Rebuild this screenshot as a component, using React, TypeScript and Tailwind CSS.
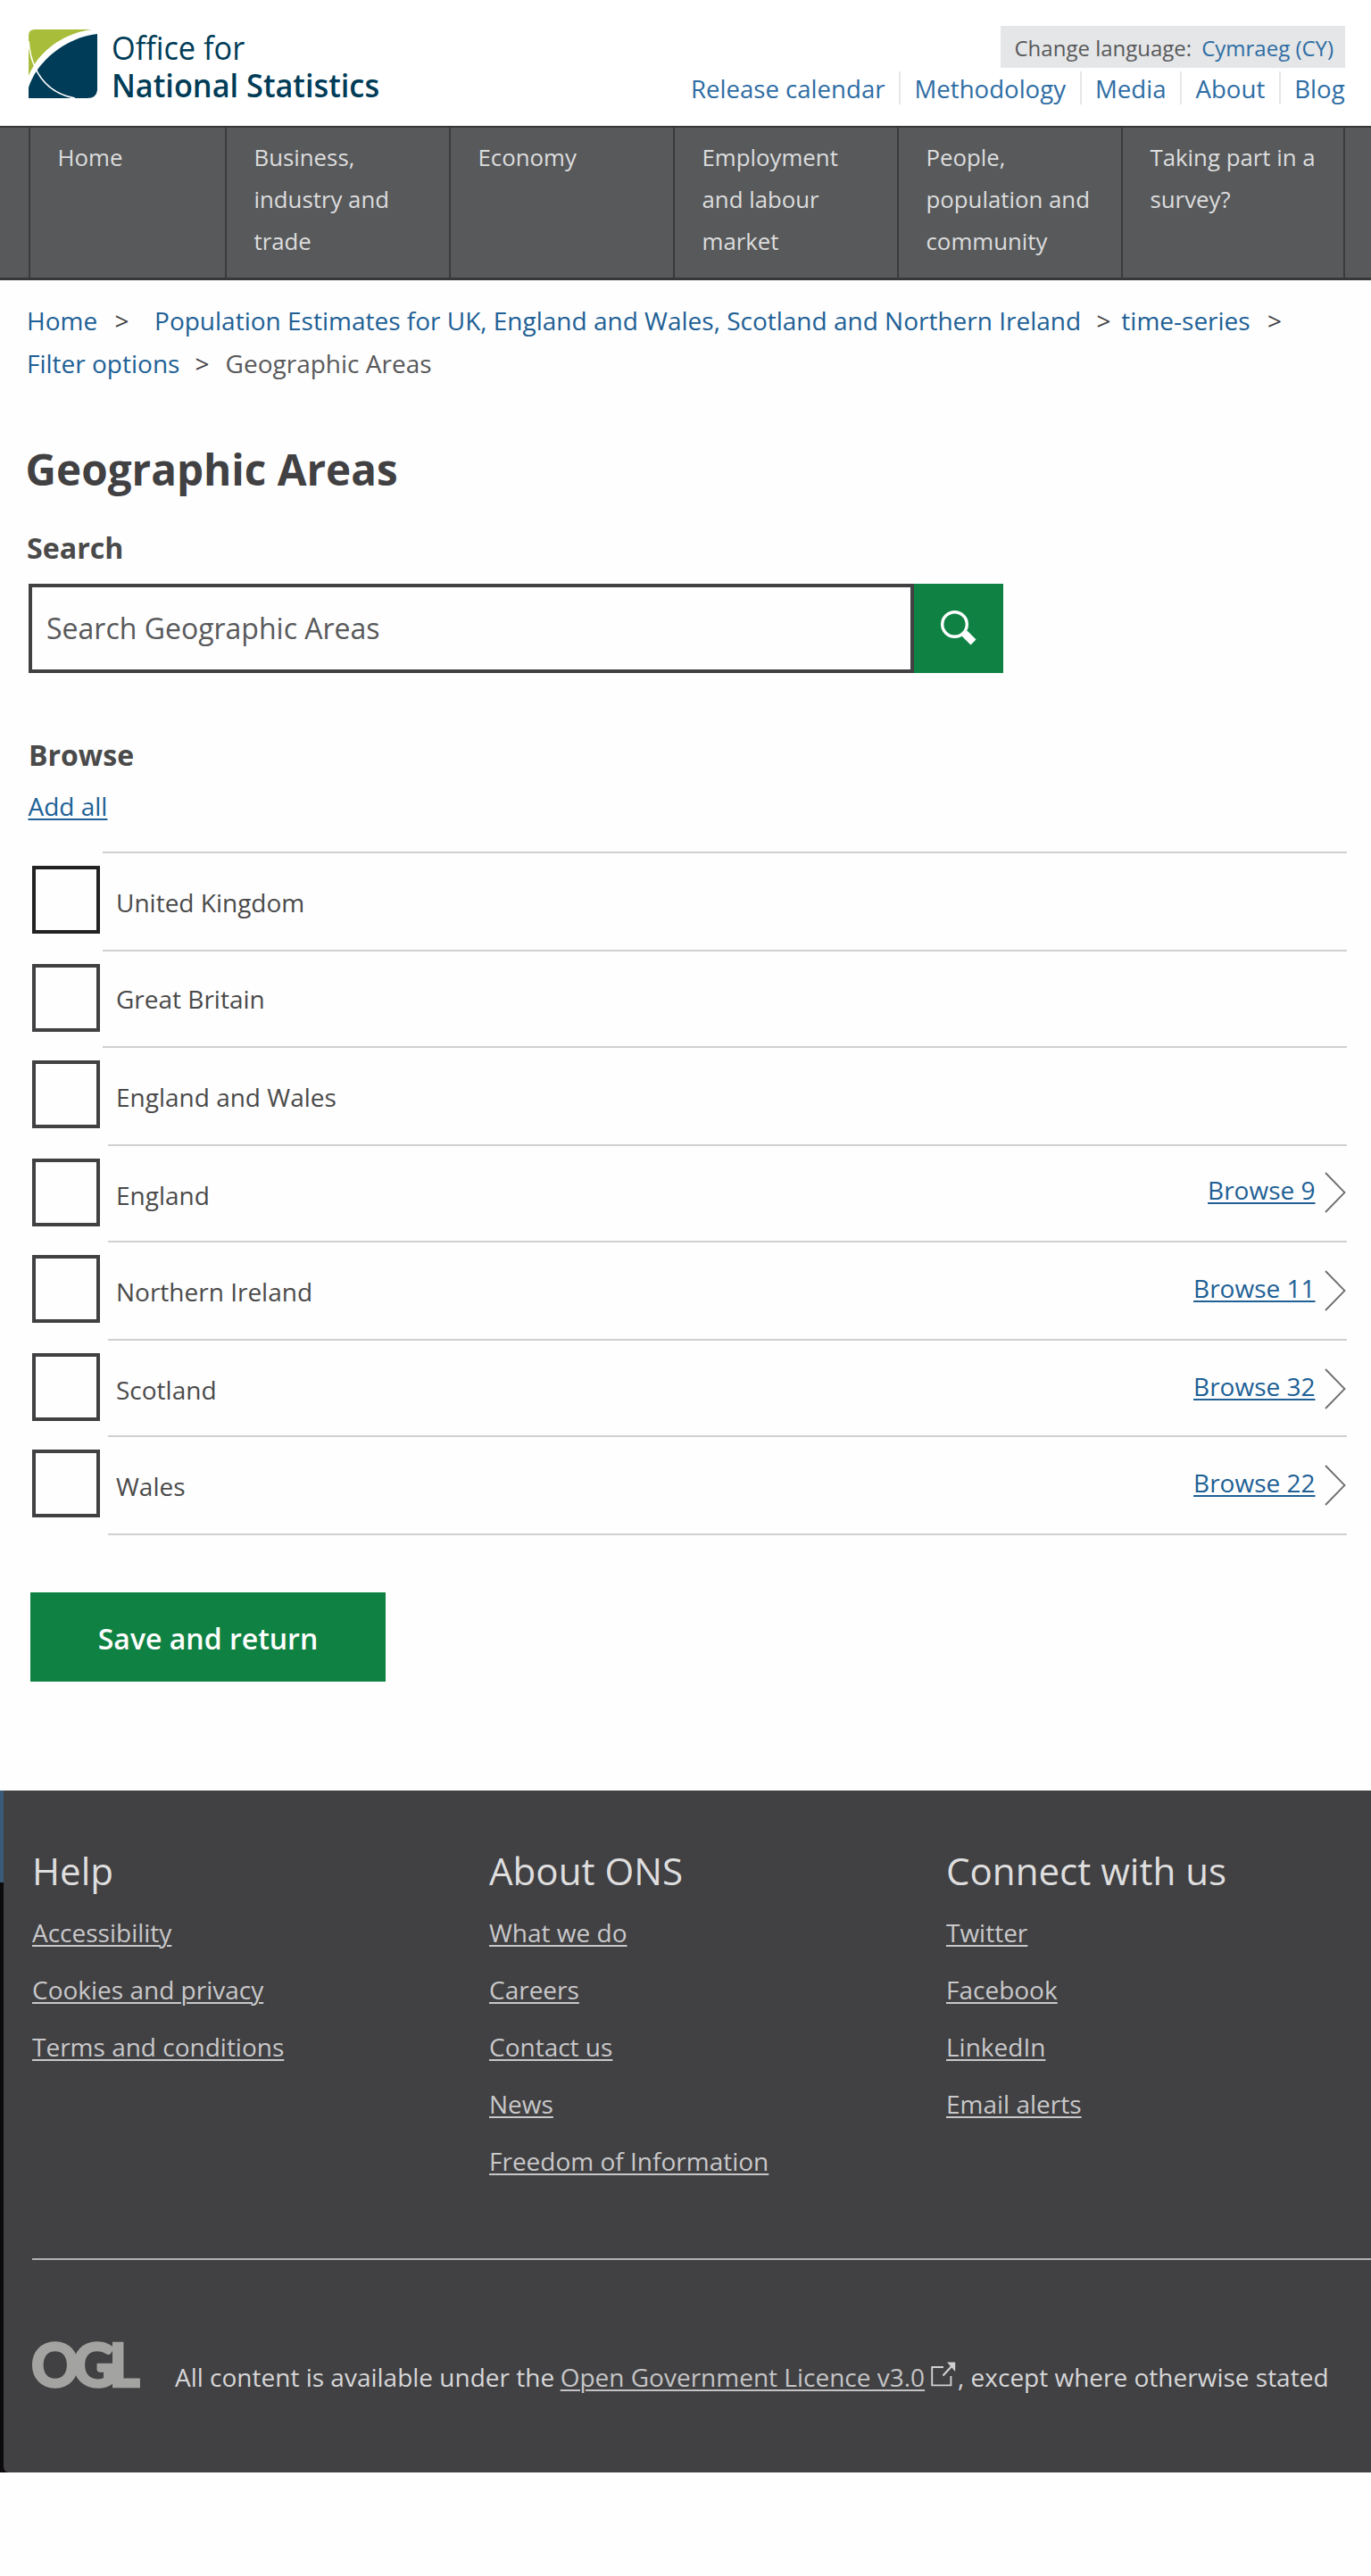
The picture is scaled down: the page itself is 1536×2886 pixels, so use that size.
const navItems: { lines: string[]; width: string }[] = [
  { lines: ["Home"], width: "w-[220px]" },
  { lines: ["Business,", "industry and", "trade"], width: "w-[251px]" },
  { lines: ["Economy"], width: "w-[251px]" },
  { lines: ["Employment", "and labour", "market"], width: "w-[251px]" },
  { lines: ["People,", "population and", "community"], width: "w-[251px]" },
  { lines: ["Taking part in a", "survey?"], width: "w-[249px]" },
];

const topLinks = ["Release calendar", "Methodology", "Media", "About", "Blog"];

type Area = {
  name: string;
  browse?: string;
  height: string;
  rule: string;
  box: string;
  labelTop: string;
  browseTop?: string;
  chevronTop?: string;
};

const areas: Area[] = [
  { name: "United Kingdom", height: "h-[110px]", rule: "ml-[3px]", box: "border-[#222222]", labelTop: "mt-[36px]" },
  { name: "Great Britain", height: "h-[108px]", rule: "ml-[3px]", box: "border-[#414042]", labelTop: "mt-[34px]" },
  { name: "England and Wales", height: "h-[110px]", rule: "ml-[3px]", box: "border-[#414042]", labelTop: "mt-[36px]" },
  { name: "England", browse: "Browse 9", height: "h-[108px]", rule: "ml-[9px]", box: "border-[#414042]", labelTop: "mt-[36px]", browseTop: "mt-[30px]", chevronTop: "mt-[28px]" },
  { name: "Northern Ireland", browse: "Browse 11", height: "h-[110px]", rule: "ml-[9px]", box: "border-[#414042]", labelTop: "mt-[36px]", browseTop: "mt-[32px]", chevronTop: "mt-[30px]" },
  { name: "Scotland", browse: "Browse 32", height: "h-[108px]", rule: "ml-[9px]", box: "border-[#414042]", labelTop: "mt-[36px]", browseTop: "mt-[32px]", chevronTop: "mt-[30px]" },
  { name: "Wales", browse: "Browse 22", height: "h-[110px]", rule: "ml-[9px]", box: "border-[#414042]", labelTop: "mt-[36px]", browseTop: "mt-[32px]", chevronTop: "mt-[30px]" },
];

const footerColumns = [
  { title: "Help", links: ["Accessibility", "Cookies and privacy", "Terms and conditions"] },
  { title: "About ONS", links: ["What we do", "Careers", "Contact us", "News", "Freedom of Information"] },
  { title: "Connect with us", links: ["Twitter", "Facebook", "LinkedIn", "Email alerts"] },
];

function LogoMark() {
  return (
    <svg width="77" height="77" viewBox="0 0 77 77" aria-hidden="true">
      <clipPath id="mark">
        <path d="M7 0H77V68Q76 77 66 77H0V7Q0 0 7 0Z" />
      </clipPath>
      <g clipPath="url(#mark)">
        <rect width="77" height="77" fill="#ffffff" />
        <path d="M0 0H71C46 3 22 17 8 37C5 42 2 47 0 52Z" fill="#a8bd3a" />
        <path d="M77 5C50 8 25 24 10 45C5 52 2 59 0 65V77H77Z" fill="#003c57" />
        <path d="M0 13Q1 28 7 42C15 60 30 73 52 77" fill="none" stroke="#ffffff" strokeWidth="1.7" />
      </g>
    </svg>
  );
}

function Header() {
  return (
    <header className="flex h-[141px] justify-between bg-white pl-8">
      <div className="flex">
        <div className="pt-[33px]">
          <LogoMark />
        </div>
        <div className="ml-[16px] origin-left scale-x-[0.94] pt-[32px] text-[36.5px] leading-[42px] whitespace-nowrap text-[#003c57]">
          <div>Office for</div>
          <div className="font-semibold">National Statistics</div>
        </div>
      </div>
      <div className="flex flex-col items-end pt-[29px] pr-[29px]">
        <div className="flex h-[47px] w-[386px] gap-[11px] bg-[#e5e6e7] pt-px pl-[15.5px] text-[24px] leading-[47px] whitespace-nowrap">
          <span className="text-[#58595b]">Change language:</span>
          <a className="text-[#2e6da4]">Cymraeg (CY)</a>
        </div>
        <nav className="mt-[4px] mr-[0.4px] flex h-[37px] text-[27.6px] leading-[38px] whitespace-nowrap text-[#2e6da4]">
          {topLinks.map((label, i) => (
            <a key={label} className={i === 0 ? "" : "ml-[15.5px] border-l-2 border-[#e6e7e8] pl-[15.5px]"}>
              {label}
            </a>
          ))}
        </nav>
      </div>
    </header>
  );
}

function Navigation() {
  return (
    <nav className="flex h-[173px] border-t-2 border-b-[3px] border-[#373737] bg-[#58595b] pl-[31.5px] text-[25.8px] leading-[47px] text-[#dcddde]">
      {navItems.map((item) => (
        <a key={item.lines[0]} className={`${item.width} shrink-0 border-l-2 border-[#3b3b3c] pt-[9.5px] pl-[31px] whitespace-nowrap`}>
          {item.lines.map((line) => (
            <span key={line} className="block">
              {line}
            </span>
          ))}
        </a>
      ))}
      <span className="w-[2px] bg-[#3b3b3c]" />
    </nav>
  );
}

function Breadcrumb() {
  return (
    <div className="pt-[21px] text-[28px] leading-[48px] whitespace-nowrap text-[#206095]">
      <div className="flex pl-[30px]">
        <a>Home</a>
        <span className="ml-[19.4px] text-[#414042]">&gt;</span>
        <a className="ml-[28.5px]">Population Estimates for UK, England and Wales, Scotland and Northern Ireland</a>
        <span className="ml-[17.4px] text-[#414042]">&gt;</span>
        <a className="ml-[11.8px]">time-series</a>
        <span className="ml-[19.4px] text-[#414042]">&gt;</span>
      </div>
      <div className="flex pl-[30px]">
        <a>Filter options</a>
        <span className="ml-[17px] text-[#414042]">&gt;</span>
        <span className="ml-[18.2px] text-[#58595b]">Geographic Areas</span>
      </div>
    </div>
  );
}

function SearchBox() {
  return (
    <div className="mt-[18px] ml-[32px] flex h-[100px]">
      <div className="flex w-[992px] items-center border-4 border-[#414042] pl-[16px] text-[32px] leading-[44px] text-[#58595b]">
        Search Geographic Areas
      </div>
      <button className="flex w-[100px] bg-[#0f8243] pt-[30px] pl-[30px]">
        <svg width="40" height="39" viewBox="0 0 40 39" aria-hidden="true">
          <circle cx="15.5" cy="15.5" r="13.8" fill="none" stroke="#ffffff" strokeWidth="3.4" />
          <path d="M29.5 22.5L39.5 32.5L33.5 38.5L23.5 28.5Z" fill="#ffffff" />
        </svg>
      </button>
    </div>
  );
}

function AreaRow({ area }: { area: Area }) {
  return (
    <div className={`flex ${area.height}`}>
      <span className={`mt-[16px] size-[76px] shrink-0 border-4 ${area.box}`} />
      <div className={`flex grow ${area.rule} border-t-2 border-[#d0d0d0]`}>
        <span className={`${area.labelTop} ${area.rule === "ml-[3px]" ? "ml-[15px]" : "ml-[9px]"} grow text-[#4a4a4a]`}>{area.name}</span>
        {area.browse && (
          <>
            <a className={`${area.browseTop} self-start text-[#206095] underline decoration-2 underline-offset-[3px]`}>{area.browse}</a>
            <svg className={`${area.chevronTop} mr-[1.5px] ml-[10px]`} width="24" height="48" viewBox="0 0 24 48" aria-hidden="true">
              <path d="M1 2L22.5 24L1 46" fill="none" stroke="#6d6e70" strokeWidth="1.8" />
            </svg>
          </>
        )}
      </div>
    </div>
  );
}

function Footer() {
  return (
    <footer className="mt-[122px] flex h-[764px] bg-[#0c0a0b]">
      <div className="w-[4px] shrink-0">
        <div className="h-[103px] bg-[#3a5a79]" />
      </div>
      <div className="flex grow flex-col rounded-bl-[6px] bg-[#414042] pl-[32px]">
        <div className="grid h-[524px] grid-cols-[512px_512px_1fr] pt-[62px] whitespace-nowrap">
          {footerColumns.map((column) => (
            <div key={column.title}>
              <h2 className="text-[42.1px] leading-[56px] text-[#dededf]">{column.title}</h2>
              <ul className="mt-[9px] text-[28px] leading-[64px] text-[#c8c8ca]">
                {column.links.map((link) => (
                  <li key={link}>
                    <a className="underline decoration-2 underline-offset-[3px]">{link}</a>
                  </li>
                ))}
              </ul>
            </div>
          ))}
        </div>
        <div className="h-[2px] shrink-0 bg-[#b1b1b3]" />
        <div className="flex pt-[91px] whitespace-nowrap">
          <div className="-ml-px w-[161px] font-[Lato] text-[66px] leading-[52px] font-black tracking-[-7px] text-[#a3a4a1] [-webkit-text-stroke:2.5px_#a3a4a1]">
            OGL
          </div>
          <div className="flex pt-[18px] text-[28px] leading-[44px] text-[#d6d6d8]">
            <span>All content is available under the</span>
            <a className="ml-[6.5px] text-[#c4c4c6] underline decoration-2 underline-offset-[3px]">Open Government Licence v3.0</a>
            <svg className="mt-[5px] ml-[7px]" width="28" height="28" viewBox="0 0 28 28" aria-hidden="true">
              <path d="M14 6H1.2V26.4H22.4V16" fill="none" stroke="#d0d0d2" strokeWidth="1.9" />
              <path d="M13.5 15.5L25 3" fill="none" stroke="#d0d0d2" strokeWidth="2.2" />
              <path d="M18 0.5H27.2V11Z" fill="#d0d0d2" />
            </svg>
            <span className="ml-[2px]">, except where otherwise stated</span>
          </div>
        </div>
      </div>
    </footer>
  );
}

export default function App() {
  return (
    <div className="min-h-[2886px] w-[1536px] overflow-hidden bg-[#fefefe] font-['Open_Sans',sans-serif]">
      <Header />
      <Navigation />
      <main>
        <Breadcrumb />
        <h1 className="mt-[63px] pl-[28.6px] text-[47.6px] leading-[64px] font-bold text-[#414042]">Geographic Areas</h1>
        <h2 className="mt-[34px] pl-[30px] text-[32.2px] leading-[44px] font-bold text-[#4a4a4a]">Search</h2>
        <SearchBox />
        <h2 className="mt-[70px] pl-[32px] text-[32px] leading-[44px] font-bold text-[#4a4a4a]">Browse</h2>
        <div className="mt-[16px] pl-[31.5px] text-[28px] leading-[38px]">
          <a className="text-[#206095] underline decoration-2 underline-offset-[3px]">Add all</a>
        </div>
        <div className="mt-[32px] mr-[27px] ml-[36px] text-[28px] leading-[38px]">
          {areas.map((area) => (
            <AreaRow key={area.name} area={area} />
          ))}
          <div className="ml-[85px] h-[2px] bg-[#d0d0d0]" />
        </div>
        <button className="mt-[64px] ml-[34px] flex h-[100px] w-[398px] items-center justify-center bg-[#0f8243] pt-[3px] text-[32px] leading-[44px] font-semibold text-white">
          Save and return
        </button>
      </main>
      <Footer />
    </div>
  );
}
